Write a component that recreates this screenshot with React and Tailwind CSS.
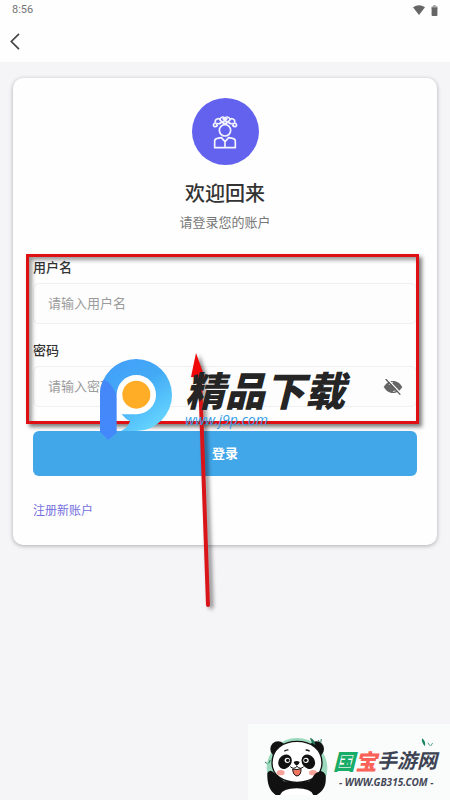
import { useState } from "react";

const AvatarIcon = () => (
  <svg viewBox="0 0 84 100" className="h-[34px] w-7" fill="none" stroke="#f4f4ff" strokeWidth="5" strokeLinecap="round" strokeLinejoin="round">
    <circle cx="42" cy="45" r="17" />
    <path d="M11 97V78q0-8 8-9l12-2 11 12 11-12 12 2q8 1 8 9v19ZM42 79v17" />
    <path d="M19 31c-8 7-15 0-10-6 4-4 9-1 8 3M65 31c8 7 15 0 10-6-4-4-9-1-8 3" />
    <path d="M13 20c-2-9 11-14 15-5M27 13c2-10 13-10 15-3 2-7 13-7 15 3M56 15c4-9 17-4 15 5M20 25c7 1 11-3 12-8M34 21c4 4 12 4 16 0M52 17c1 5 5 9 12 8M36 10l12 10M48 10L36 20" />
  </svg>
);

const EyeOffIcon = () => (
  <svg viewBox="0 0 60 48" className="h-4 w-5" fill="none">
    <path d="M2 24C11 10 20 6 30 6s19 4 28 18C49 38 40 42 30 42S11 38 2 24Z" fill="#666" />
    <path d="M18 18a13 13 0 0 1 12-8M42 27a13 13 0 0 1-12 11" stroke="#ddd" strokeWidth="3" />
    <path d="M13 0l42 45" stroke="#fff" strokeWidth="4" />
    <path d="M8 0l44 47" stroke="#5c5c5c" strokeWidth="4" />
  </svg>
);

const StatusBar = () => (
  <div className="flex h-5 items-center justify-between pl-3 pr-3 text-[11px] text-[#757575]">
    <span>8:56</span>
    <div className="flex items-center gap-1.5 text-[#666]">
      <svg viewBox="0 0 36 30" className="h-2.5 w-3" fill="currentColor">
        <path d="M0 7Q18-6 36 7L18 30Z" />
      </svg>
      <svg viewBox="0 0 20 34" className="h-[11px] w-[7px]">
        <path d="M6 0h8v4h5v8H1V4h5Z" fill="#aaa" />
        <path d="M1 8h18v23q0 3-3 3H4q-3 0-3-3Z" fill="currentColor" />
      </svg>
    </div>
  </div>
);

const Arrow = () => (
  <svg viewBox="0 0 30 264" className="absolute left-[186px] top-[348px] h-[264px] w-[30px] drop-shadow-[3px_2px_2px_rgba(0,0,0,0.5)]">
    <path d="M14 28l8 229" stroke="#d9151a" strokeWidth="4" strokeLinecap="round" />
    <path d="M10 5l9 25-14-1Z" fill="#f00808" />
  </svg>
);

const DownloadMark = () => (
  <div className="absolute left-[99px] top-[358px] flex">
    <svg viewBox="0 0 222 246" className="h-[82px] w-[74px]">
      <defs>
        <linearGradient id="ring" x1="0" y1="0" x2="0.7" y2="1">
          <stop offset="0.15" stopColor="#43a1f8" />
          <stop offset="0.5" stopColor="#42aaf5" />
          <stop offset="1" stopColor="#65d5ff" />
        </linearGradient>
        <linearGradient id="stem" x1="0" y1="0" x2="0" y2="1">
          <stop offset="0" stopColor="#4687f8" />
          <stop offset="1" stopColor="#4389fc" />
        </linearGradient>
      </defs>
      <path d="M50 108h62v62H50Z" fill="#fff" />
      <path d="M3 110A108 108 0 1 1 112 219H66Q86 211 93 190 80 184 68 169H112L54 110Z" fill="url(#ring)" />
      <path d="M3 110Q3 82 15 64 38 75 53 112V224L28 246 3 222Z" fill="url(#stem)" />
      <circle cx="112" cy="110" r="59" fill="#fff" />
      <circle cx="112" cy="110" r="42" fill="#ffac27" />
    </svg>
    <div className="ml-3 mt-2 italic">
      <p className="whitespace-nowrap font-['Noto_Sans_CJK_SC',sans-serif] text-[40px] font-black leading-[46px] text-[#252525]">精品下载</p>
      <p className="font-['Open_Sans',sans-serif] text-sm leading-4 text-[#369ee5]">www.j9p.com</p>
    </div>
  </div>
);

const PandaIcon = () => (
  <svg viewBox="54 42 198 183" className="h-[61px] w-[66px]">
    <circle cx="156" cy="145" r="91" fill="#9cd9bd" />
    <path d="M67 160q6-14 20-2l30 26h76l16-18q2-14 14-14 14 1 19 14c2 26-2 44-27 59H92c-20-14-26-36-25-65Z" fill="#111" />
    <path d="M105 225q8-20 50-20 43 0 50 20Z" fill="#fff" />
    <circle cx="99" cy="87" r="23" fill="#111" />
    <circle cx="214" cy="87" r="23" fill="#111" />
    <path d="M156 64c42 0 75 24 75 65 0 38-34 58-75 58s-75-20-75-58c0-41 33-65 75-65Z" fill="#fff" stroke="#111" strokeWidth="4" />
    <path d="M118 94q6-5 12-4M182 90q7 0 12 4" fill="none" stroke="#111" strokeWidth="4" />
    <ellipse cx="120" cy="125" rx="19" ry="23" transform="rotate(35 120 125)" fill="#111" />
    <ellipse cx="190" cy="125" rx="19" ry="23" transform="rotate(-35 190 125)" fill="#111" />
    <circle cx="127" cy="121" r="8" fill="#fff" />
    <circle cx="183" cy="121" r="8" fill="#fff" />
    <circle cx="128" cy="121" r="5" fill="#111" />
    <circle cx="182" cy="121" r="5" fill="#111" />
    <path d="M146 126q9-6 18 0-2 9-9 11-7-2-9-11Z" fill="#111" />
    <path d="M136 140q10 10 20-1 10 11 20 1" fill="none" stroke="#111" strokeWidth="3" />
    <path d="M143 147q13 4 25-1 1 20-12 22-12-2-13-21Z" fill="#ef765e" stroke="#111" strokeWidth="3" />
    <ellipse cx="107" cy="158" rx="12" ry="8" fill="#f8a49b" />
    <ellipse cx="204" cy="158" rx="12" ry="8" fill="#f8a49b" />
    <path d="M195 53q14 4 16 22-14-6-16-22Z" fill="#27795b" />
    <path d="M219 60l5 7M229 57l-2 12M60 126l7 5M76 120l-5 10" stroke="#27795b" strokeWidth="3" />
    <path d="M202 175q8-20 22-20 13 4 14 20l-12 18Z" fill="#111" />
  </svg>
);

const PandaMark = () => (
  <div className="absolute bottom-0 right-0 flex h-[76px] w-[202px] bg-[#fafbfb] pl-[15px] pt-2.5">
    <PandaIcon />
    <div className="relative ml-1 mt-3 font-['Noto_Sans_CJK_SC',sans-serif]">
      <svg viewBox="0 0 36 30" className="absolute -top-2 right-1 h-2.5 w-3">
        <path d="M3 1q12 8 9 24Q0 14 3 1Z" fill="#18875e" />
        <path d="M21 14l5 9M35 15l-6 9" stroke="#54a786" strokeWidth="3" />
      </svg>
      <p className="flex items-center whitespace-nowrap text-[20px] font-bold italic leading-7 text-[#3d4353]">
        <span className="text-[22px] font-black text-[#17ad68]">国</span>
        <span className="text-[22px] font-black text-[#fa6257]">宝</span>
        <span>手游网</span>
      </p>
      <p className="ml-1.5 mt-0.5 whitespace-nowrap font-['Noto_Sans',sans-serif] text-[10px] font-bold italic leading-3 text-[#454858]">- WWW.GB315.COM -</p>
    </div>
  </div>
);

const inputStyle =
  "h-[41px] w-full rounded-md border border-[#f0f0f1] bg-[#fdfdfd] px-3.5 text-[13px] text-[#333] placeholder:text-[#9b9b9b] focus:outline-none";

export default function App() {
  const [showPassword, setShowPassword] = useState(false);

  return (
    <div className="relative min-h-screen overflow-hidden bg-[#f5f5f8] font-[Roboto,'Noto_Sans_CJK_SC',sans-serif]">
      <header className="bg-[#fefefe]">
        <StatusBar />
        <div className="flex h-[42px] items-center pl-2.5">
          <button type="button" aria-label="返回">
            <svg viewBox="0 0 30 50" className="h-[17px] w-2.5" fill="none" stroke="#444" strokeWidth="5">
              <path d="M27 2L4 25l23 23" />
            </svg>
          </button>
        </div>
      </header>

      <main className="mx-[13px] mt-4 rounded-[10px] bg-[#fefefe] px-5 pb-6 pt-5 shadow-[0_1px_4px_rgba(0,0,0,0.3)]">
        <div className="mx-auto flex size-[67px] items-center justify-center rounded-full bg-[#6262ef]">
          <AvatarIcon />
        </div>
        <h1 className="mt-[15px] text-center text-xl font-medium leading-7 text-[#333]">欢迎回来</h1>
        <p className="mt-[5px] text-center text-[13px] leading-5 text-[#777]">请登录您的账户</p>

        <form onSubmit={(e) => e.preventDefault()}>
          <div className="relative mt-[25px]">
            <label htmlFor="username" className="block text-[13px] font-medium leading-5 text-[#333]">用户名</label>
            <input id="username" type="text" placeholder="请输入用户名" className={`mt-[5px] ${inputStyle}`} />

            <label htmlFor="password" className="mt-[17px] block text-[13px] font-medium leading-5 text-[#333]">密码</label>
            <div className="relative mt-[5px]">
              <input id="password" type={showPassword ? "text" : "password"} placeholder="请输入密码" className={inputStyle} />
              <button
                type="button"
                aria-label="显示密码"
                className="absolute inset-y-0 right-3.5 flex items-center"
                onClick={() => setShowPassword(!showPassword)}
              >
                <EyeOffIcon />
              </button>
            </div>

            <div className="pointer-events-none absolute -bottom-[17px] -left-[7px] -right-0.5 -top-1 border-3 border-[#df1014] shadow-[3px_3px_4px_rgba(0,0,0,0.5),inset_3px_3px_4px_rgba(0,0,0,0.4)]" />
          </div>

          <button type="submit" className="mt-6 h-[45px] w-full rounded-md bg-[#42a7e9] text-[13px] font-bold text-white">
            登录
          </button>
        </form>

        <a href="#register" className="mt-[25px] block w-fit text-xs leading-5 text-[#7570df]">注册新账户</a>
      </main>

      <div className="pointer-events-none">
        <Arrow />
        <DownloadMark />
        <PandaMark />
      </div>
    </div>
  );
}
